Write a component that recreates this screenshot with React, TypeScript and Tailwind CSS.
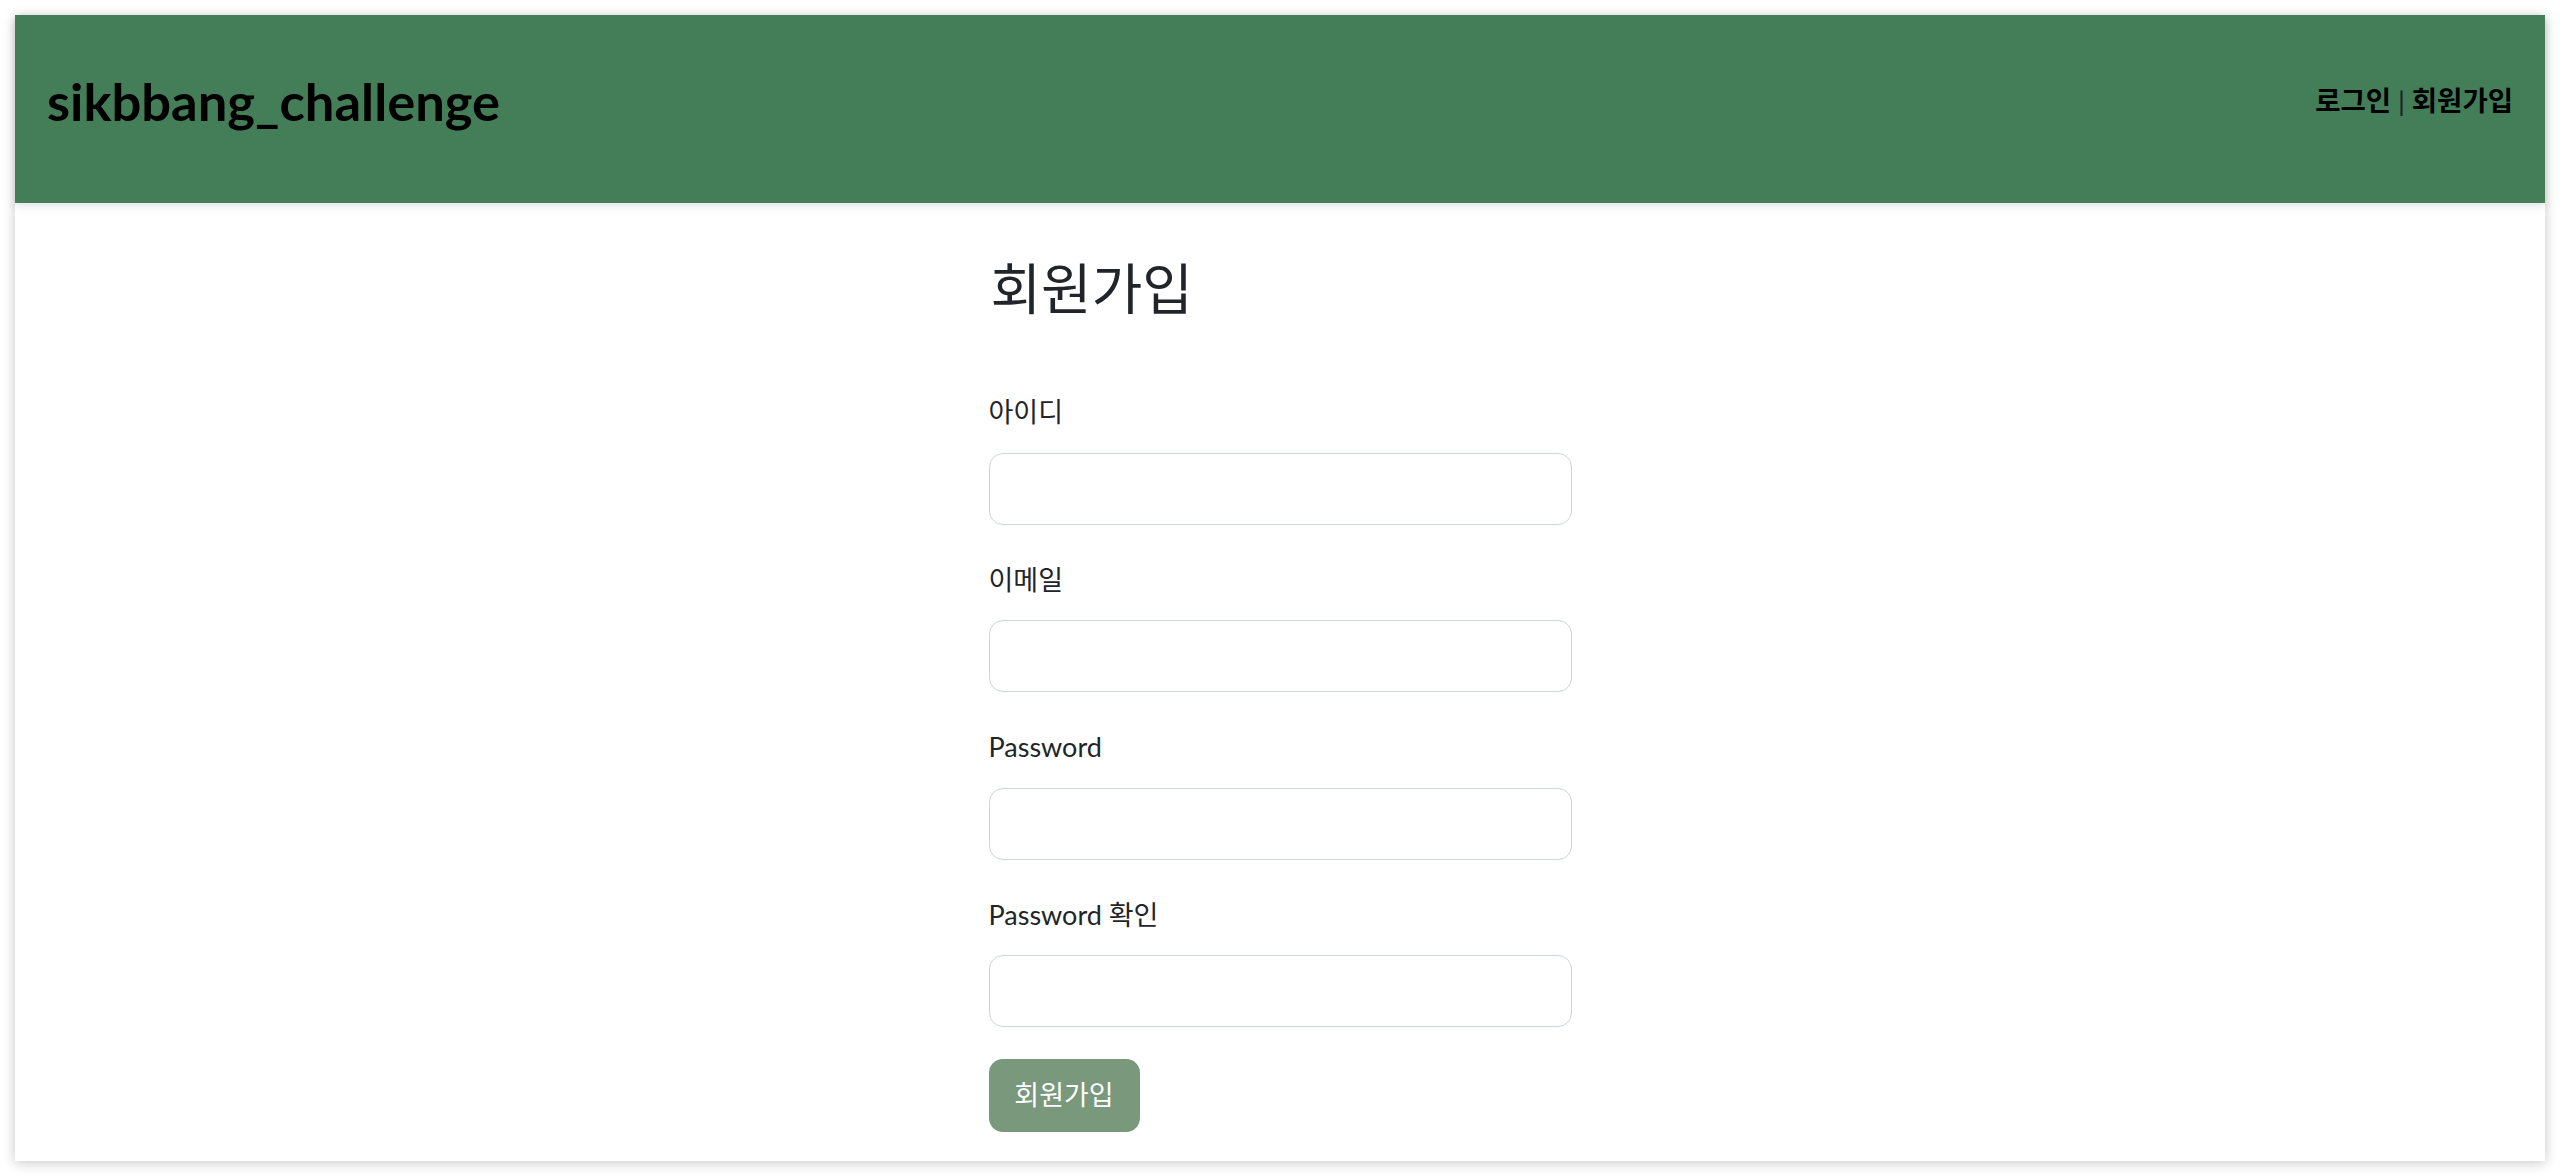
const FIELDS = [
  { label: "아이디", type: "text" },
  { label: "이메일", type: "email" },
  { label: "Password", type: "password" },
  { label: "Password 확인", type: "password" },
];

const FONT = "font-['Lato','Noto_Sans_CJK_KR',sans-serif]";

function Field({ label, type }: { label: string; type: string }) {
  return (
    <div className="flex flex-col">
      <label className="mt-[37px] mb-[22.5px] h-[36px] text-[27px] leading-[36px] text-[#212529]">
        {label}
      </label>
      <input
        type={type}
        className="h-[72px] w-full rounded-[14px] border border-[#ced4da] bg-white px-5 outline-none"
      />
    </div>
  );
}

export default function App() {
  return (
    <div className={`min-h-[1175px] bg-white p-[15px] ${FONT}`}>
      <div className="h-[1146px] bg-white shadow-[0_2px_12px_rgba(0,0,0,0.22)]">
        <header className="flex h-[188px] items-center justify-between bg-[#437e58] px-[32px] shadow-[0_3px_8px_rgba(0,0,0,0.12)]">
          <h1 className="pb-[16px] text-[52.5px] leading-none font-bold text-black">
            sikbbang_challenge
          </h1>
          <nav className="pb-[16px] text-[27.5px] font-semibold text-black">
            <a href="#">로그인</a> <span className="font-medium text-[#212529]">|</span>{" "}
            <a href="#">회원가입</a>
          </nav>
        </header>
        <main className="mx-auto w-[583px]">
          <h2 className="mt-[48px] pl-[2px] text-[55px] leading-[75px] font-normal text-[#212529]">
            회원가입
          </h2>
          <form className="mt-[31px] flex flex-col">
            {FIELDS.map((f) => (
              <Field key={f.label} {...f} />
            ))}
            <button
              type="button"
              className="mt-[32px] h-[73px] w-[151px] rounded-[14px] bg-[#79987c] text-[27px] text-white"
            >
              회원가입
            </button>
          </form>
        </main>
      </div>
    </div>
  );
}
